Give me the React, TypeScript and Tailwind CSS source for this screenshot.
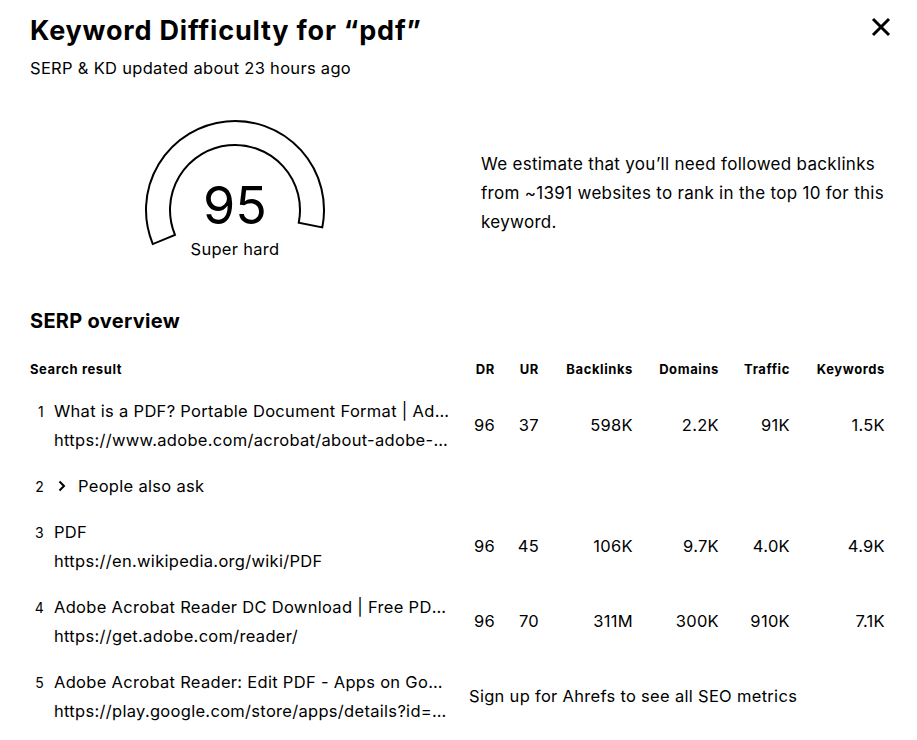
import React from "react";

type Row = {
  n: number;
  title: string;
  url?: string;
  metrics?: string[];
  expand?: boolean;
  locked?: boolean;
};

const rows: Row[] = [
  {
    n: 1,
    title: "What is a PDF? Portable Document Format | Adobe Acrobat",
    url: "https://www.adobe.com/acrobat/about-adobe-pdf.html",
    metrics: ["96", "37", "598K", "2.2K", "91K", "1.5K"],
  },
  { n: 2, title: "People also ask", expand: true },
  {
    n: 3,
    title: "PDF",
    url: "https://en.wikipedia.org/wiki/PDF",
    metrics: ["96", "45", "106K", "9.7K", "4.0K", "4.9K"],
  },
  {
    n: 4,
    title: "Adobe Acrobat Reader DC Download | Free PDF viewer",
    url: "https://get.adobe.com/reader/",
    metrics: ["96", "70", "311M", "300K", "910K", "7.1K"],
  },
  {
    n: 5,
    title: "Adobe Acrobat Reader: Edit PDF - Apps on Google Play",
    url: "https://play.google.com/store/apps/details?id=com.adobe.reader",
    locked: true,
  },
];

const heads = ["DR", "UR", "Backlinks", "Domains", "Traffic", "Keywords"];

const cols = "grid grid-cols-[425px_40px_44px_94px_86px_71px_95px]";

function Gauge() {
  // 225° gauge, 95% filled
  return (
    <div className="relative w-[190px] h-[143px]">
      <svg width="190" height="143" viewBox="0 0 190 143" className="absolute left-0 top-0">
        <path
          d="M12.8 126.06 A89 89 0 1 1 182.29 109.36 L158.75 104.68 A65 65 0 1 0 34.95 116.87 Z"
          fill="white"
          stroke="black"
          strokeWidth="2"
          strokeLinejoin="miter"
        />
      </svg>
      <div className="absolute left-0 right-0 top-[62px] text-center text-[52px] leading-[52px] tracking-normal">
        95
      </div>
      <div className="absolute left-0 right-0 top-[120px] text-center text-[16.5px] leading-[22px]">
        Super hard
      </div>
    </div>
  );
}

export default function App() {
  return (
    <div
      className="w-[917px] h-[740px] bg-white overflow-hidden text-black tracking-[0.3px]"
      style={{ fontFamily: "Inter, 'Noto Sans', sans-serif" }}
    >
      <div className="flex justify-between pl-[30px] pr-[26px] pt-[14px]">
        <div>
          <h1 className="text-[27px] leading-[34px] font-bold tracking-[0.8px]">Keyword Difficulty for “pdf”</h1>
          <p className="mt-[8px] text-[16.5px] leading-[24px]">SERP &amp; KD updated about 23 hours ago</p>
        </div>
        <button className="mt-[3px] w-[20px] h-[20px]" aria-label="Close">
          <svg width="20" height="20" viewBox="0 0 20 20">
            <path d="M2 2 L18 18 M18 2 L2 18" stroke="black" strokeWidth="3" />
          </svg>
        </button>
      </div>

      <div className="flex mt-[38px] pl-[140px]">
        <Gauge />
        <p className="ml-[151px] mt-[31.5px] w-[410px] text-[17px] leading-[29px]">
          We estimate that you’ll need followed backlinks from ~1391 websites to rank in the top 10 for this
          keyword.
        </p>
      </div>

      <div className="pl-[30px] pr-[32px]">
        <h2 className="mt-[46px] text-[20px] leading-[28px] font-bold">SERP overview</h2>

        <div className={`${cols} mt-[17px] h-[36px] items-center text-[13px] font-bold tracking-[0.6px]`}>
          <div>Search result</div>
          {heads.map((h) => (
            <div key={h} className="text-right">
              {h}
            </div>
          ))}
        </div>

        {rows.map((r) => (
          <div key={r.n} className={`${cols} items-center py-[8.5px] text-[16.5px] leading-[29px]`}>
            <div className="flex min-w-0">
              <span className="w-[14px] shrink-0 text-right text-[14px]">{r.n}</span>
              <div className="ml-[10px] min-w-0 w-[395px]">
                {r.expand ? (
                  <div className="flex items-center">
                    <svg width="12" height="14" viewBox="0 0 12 14" className="ml-[2px] mr-[10px]">
                      <path d="M3.5 2.5 L8 7 L3.5 11.5" fill="none" stroke="black" strokeWidth="2" />
                    </svg>
                    <span>{r.title}</span>
                  </div>
                ) : (
                  <>
                    <div className="truncate">{r.title}</div>
                    <div className="truncate">{r.url}</div>
                  </>
                )}
              </div>
            </div>
            {r.metrics &&
              r.metrics.map((m, i) => (
                <div key={i} className="text-right">
                  {m}
                </div>
              ))}
            {r.locked && <div className="col-span-6 ml-[14px]">Sign up for Ahrefs to see all SEO metrics</div>}
          </div>
        ))}
      </div>
    </div>
  );
}
